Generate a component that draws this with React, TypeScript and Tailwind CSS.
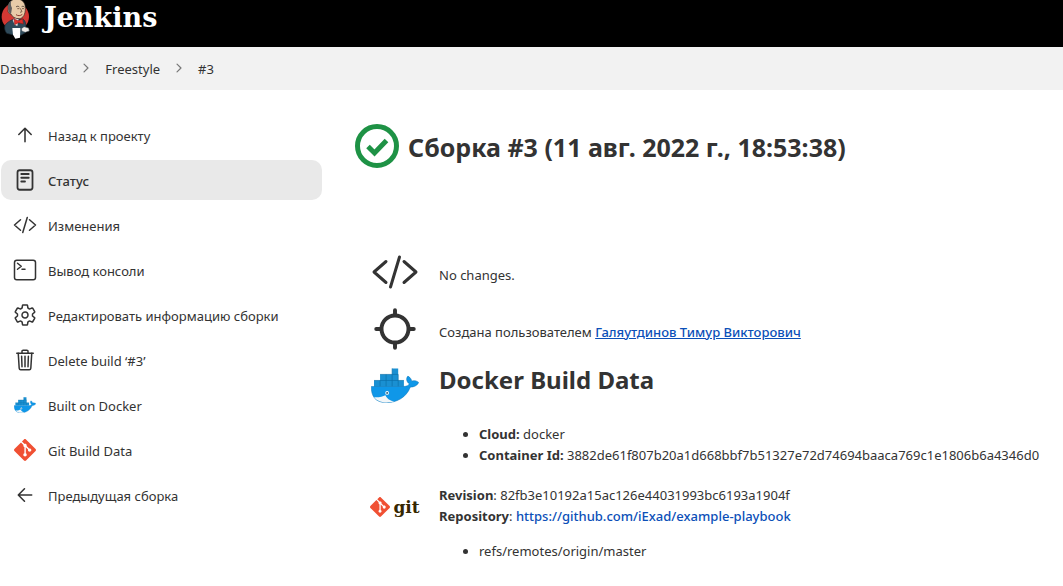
import type { ReactNode } from "react";
import {
  IoArrowBackOutline,
  IoArrowUpOutline,
  IoChevronForwardOutline,
  IoCodeSlashOutline,
  IoLocateOutline,
  IoReaderOutline,
  IoSettingsOutline,
  IoTerminalOutline,
  IoTrashOutline,
} from "react-icons/io5";
import { SiGit } from "react-icons/si";

function Butler() {
  return (
    <svg viewBox="0 0 96 120" className="h-10 w-8 shrink-0" aria-hidden="true">
      <circle cx="46" cy="50" r="41" fill="#d33833" />
      <path d="M15 76C20 67 36 58 46 56L70 58C78 64 80 80 76 98L62 106L38 104L20 100C14 92 13 84 15 76Z" fill="#2f4a5a" stroke="#1c2c36" strokeWidth="2" />
      <path d="M38 60L46 54L56 58L52 78L44 74Z" fill="#e9e9e9" />
      <path d="M25 18C26 6 36 -3 50 -3C66 -3 77 8 76 26C76 42 70 55 58 56C46 57 36 50 33 42C26 42 22 34 25 28Z" fill="#e8cba8" stroke="#2b2420" strokeWidth="2" />
      <path d="M25 30C22 20 24 8 34 2C31 10 33 18 36 24L33 42C28 40 25 36 25 30Z" fill="#5f5d5e" />
      <path d="M48 21C51 18 55 18 58 21M65 20C68 18 71 19 73 21" fill="none" stroke="#3b2f28" strokeWidth="2.5" />
      <path d="M52 26H58M66 26H72M61 25L66 35L60 37" fill="none" stroke="#6b4b38" strokeWidth="2.5" />
      <path d="M48 44C54 48 61 48 67 43" fill="none" stroke="#8c3a30" strokeWidth="3" />
      <path d="M42 57L55 62L68 56L70 72L56 68L44 74Z" fill="#e02f2b" stroke="#7a1614" strokeWidth="1.5" />
      <path d="M37 84L61 84L60 113L46 116L39 104Z" fill="#fff" />
      <path d="M64 86L72 80L86 84L88 93L76 97L66 94Z" fill="#eeeae6" stroke="#33424d" strokeWidth="1.5" />
    </svg>
  );
}

function Whale({ className }: { className: string }) {
  return (
    <svg viewBox="33 368 143 104" className={className} aria-hidden="true">
      <path d="M96 369H114V387V405H131V424H42V405H60V387H96Z" fill="#1a90d2" />
      <path d="M42 405H131M60 387H114M60 405V423M78 387V423M96 369V423M114 387V423" stroke="#0b6fa8" strokeWidth="2" fill="none" />
      <path d="M34 423H128C139 423 146 420 147 415C138 409 137 398 143 392C150 396 154 402 154 407C161 404 170 406 175 411C172 420 160 425 150 425C138 456 110 471 78 471C45 471 33 450 34 423Z" fill="#0f97e8" stroke="#0b73b5" strokeWidth="1.5" />
      <path d="M42 455C57 456 68 453 76 449C80 459 90 466 102 467C84 473 56 473 42 455Z" fill="#f2f6f8" />
      <circle cx="81" cy="442" r="5.5" fill="#fff" />
      <circle cx="81" cy="442" r="2.8" fill="#22506b" />
    </svg>
  );
}

function SuccessIcon() {
  return (
    <svg viewBox="0 0 44 44" className="size-11 shrink-0" role="img" aria-label="Success">
      <circle cx="22" cy="22" r="19.5" fill="none" stroke="#1e9245" strokeWidth="5" />
      <path d="M13 22.5L19.5 29L31.5 16.5" fill="none" stroke="#1e9245" strokeWidth="5" />
    </svg>
  );
}

type Task = { label: string; icon: ReactNode; active?: boolean };

const tasks: Task[] = [
  { label: "Назад к проекту", icon: <IoArrowUpOutline className="size-[22px] [&_path]:[stroke-width:36px]" /> },
  { label: "Статус", icon: <IoReaderOutline className="size-6 [&_*]:[stroke-width:38px]" />, active: true },
  { label: "Изменения", icon: <IoCodeSlashOutline className="size-6" /> },
  { label: "Вывод консоли", icon: <IoTerminalOutline className="size-6" /> },
  { label: "Редактировать информацию сборки", icon: <IoSettingsOutline className="size-6" /> },
  { label: "Delete build ‘#3’", icon: <IoTrashOutline className="size-6" /> },
  { label: "Built on Docker", icon: <Whale className="h-4 w-[22px]" /> },
  { label: "Git Build Data", icon: <SiGit className="size-[22px] text-[#f05033]" /> },
  { label: "Предыдущая сборка", icon: <IoArrowBackOutline className="size-[22px] [&_path]:[stroke-width:36px]" /> },
];

function Row({ icon, children }: { icon: ReactNode; children: ReactNode }) {
  return (
    <section className="flex gap-5">
      <div className="flex w-12 shrink-0 items-center justify-center self-start">{icon}</div>
      <div className="min-w-0 flex-1">{children}</div>
    </section>
  );
}

export default function App() {
  return (
    <div className="min-h-screen bg-white font-['Noto_Sans','Open_Sans',sans-serif] text-[13px] leading-[21px] text-[#333]">
      <header className="flex h-[47px] bg-black">
        <a href="#" className="flex items-start gap-3 text-white">
          <Butler />
          <span className="font-['DejaVu_Serif',serif] text-[27px] leading-9 font-bold">Jenkins</span>
        </a>
      </header>
      <nav aria-label="Breadcrumb" className="flex h-[43px] items-center bg-[#f2f2f2] pt-px">
        <a href="#">Dashboard</a>
        <IoChevronForwardOutline className="mx-3 mb-0.5 size-3.5 text-[#777] [&_path]:[stroke-width:44px]" />
        <a href="#">Freestyle</a>
        <IoChevronForwardOutline className="mx-3 mb-0.5 size-3.5 text-[#777] [&_path]:[stroke-width:44px]" />
        <a href="#">#3</a>
      </nav>
      <div className="flex">
        <aside className="w-[322px] shrink-0 pt-[25px] pl-px">
          <ul className="flex flex-col gap-[5px]">
            {tasks.map((t) => (
              <li key={t.label}>
                <a
                  href="#"
                  className={
                    t.active
                      ? "flex h-10 items-center gap-[11px] rounded-[10px] bg-[#e9e9e9] px-3 font-medium"
                      : "flex h-10 items-center gap-[11px] rounded-[10px] px-3"
                  }
                >
                  <span className="flex w-6 justify-center">{t.icon}</span>
                  <span className="pt-0.5">{t.label}</span>
                </a>
              </li>
            ))}
          </ul>
        </aside>
        <main className="min-w-0 flex-1 pt-[34px] pl-[33px]">
          <h1 className="flex items-center gap-[9px] text-[25px] leading-[44px] font-bold">
            <SuccessIcon />
            <span className="pt-0.5 leading-[42px]">Сборка #3 (11 авг. 2022 г., 18:53:38)</span>
          </h1>
          <div className="pt-20 pl-4">
            <Row icon={<IoCodeSlashOutline className="size-12" />}>
              <p className="pt-[17px]">No changes.</p>
            </Row>
            <div className="pt-[9px]">
              <Row icon={<IoLocateOutline className="size-12 [&_path]:[stroke-width:42px]" />}>
                <p className="pt-[17px]">
                  Создана пользователем{" "}
                  <a href="#" className="font-medium text-[#0b4fb8] underline">
                    Галяутдинов Тимур Викторович
                  </a>
                </p>
              </Row>
            </div>
            <div className="pt-[11px]">
              <Row icon={<Whale className="mt-1 h-[35px] w-12" />}>
                <h2 className="text-[24px] leading-8 font-bold">Docker Build Data</h2>
                <ul className="list-disc pt-7 pl-10">
                  <li>
                    <b>Cloud:</b> docker
                  </li>
                  <li>
                    <b>Container Id:</b> 3882de61f807b20a1d668bbf7b51327e72d74694baaca769c1e1806b6a4346d0
                  </li>
                </ul>
              </Row>
            </div>
            <div className="pt-[19px]">
              <Row
                icon={
                  <span className="flex items-center gap-[3px] pt-3">
                    <SiGit className="size-5 text-[#f05033]" />
                    <span className="font-['DejaVu_Serif',serif] text-[17px] leading-5 font-bold text-[#362701]">git</span>
                  </span>
                }
              >
                <p>
                  <b>Revision</b>: 82fb3e10192a15ac126e44031993bc6193a1904f
                </p>
                <p>
                  <b>Repository</b>:{" "}
                  <a href="#" className="font-medium text-[#0b4fb8]">
                    https://github.com/iExad/example-playbook
                  </a>
                </p>
                <ul className="list-disc pt-3.5 pl-10">
                  <li>refs/remotes/origin/master</li>
                </ul>
              </Row>
            </div>
          </div>
        </main>
      </div>
    </div>
  );
}
